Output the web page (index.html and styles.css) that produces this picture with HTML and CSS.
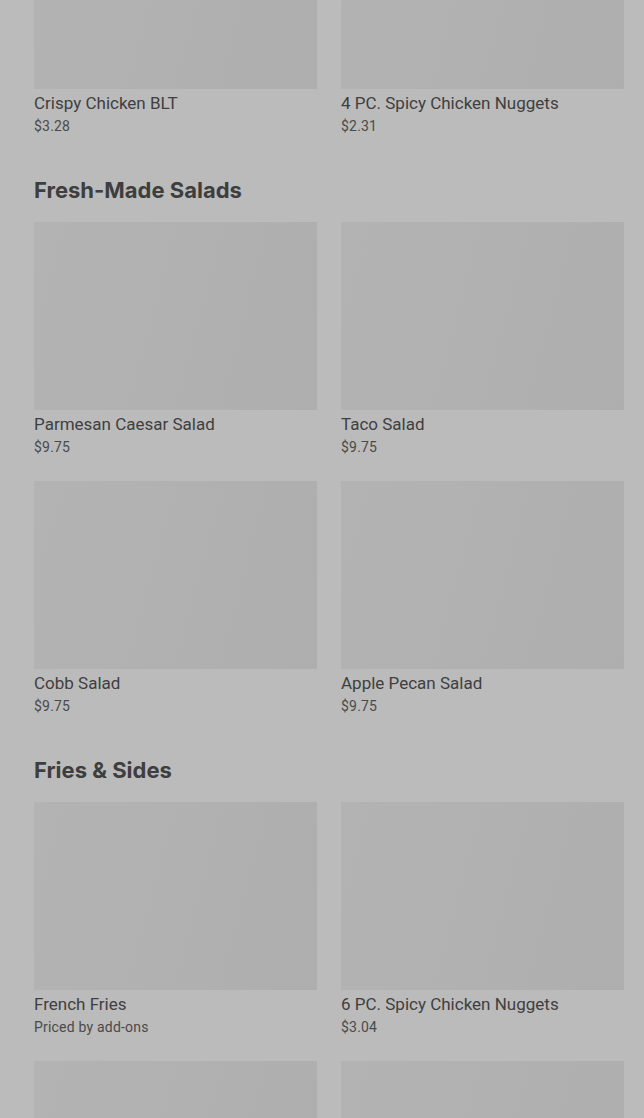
FILE: index.html
```html
<!DOCTYPE html>
<html lang="en">
<head>
<meta charset="UTF-8">
<title>Menu</title>
<link rel="stylesheet" href="styles.css">
</head>
<body>

    <div class="menu">
        <div class="section first">
            <div class="grid">
                <div class="card">
                    <div class="thumb"></div>
                    <div class="name">Crispy Chicken BLT</div>
                    <div class="price">$3.28</div>
                </div>
                <div class="card">
                    <div class="thumb"></div>
                    <div class="name">4 PC. Spicy Chicken Nuggets</div>
                    <div class="price">$2.31</div>
                </div>
            </div>
        </div>

        <div class="section">
            <h2>Fresh-Made Salads</h2>
            <div class="grid">
                <div class="card">
                    <div class="thumb"></div>
                    <div class="name">Parmesan Caesar Salad</div>
                    <div class="price">$9.75</div>
                </div>
                <div class="card">
                    <div class="thumb"></div>
                    <div class="name">Taco Salad</div>
                    <div class="price">$9.75</div>
                </div>
                <div class="card">
                    <div class="thumb"></div>
                    <div class="name">Cobb Salad</div>
                    <div class="price">$9.75</div>
                </div>
                <div class="card">
                    <div class="thumb"></div>
                    <div class="name">Apple Pecan Salad</div>
                    <div class="price">$9.75</div>
                </div>
            </div>
        </div>

        <div class="section">
            <h2>Fries &amp; Sides</h2>
            <div class="grid">
                <div class="card">
                    <div class="thumb"></div>
                    <div class="name">French Fries</div>
                    <div class="price">Priced by add-ons</div>
                </div>
                <div class="card">
                    <div class="thumb"></div>
                    <div class="name">6 PC. Spicy Chicken Nuggets</div>
                    <div class="price">$3.04</div>
                </div>
                <div class="card">
                    <div class="thumb"></div>
                </div>
                <div class="card">
                    <div class="thumb"></div>
                </div>
            </div>
        </div>
    </div>

</body>
</html>
```

FILE: styles.css
```css
/* page dimmed behind an overlay */
body {
    margin: 0;
    background-color: #bbbbbb;
    font-family: Roboto, "Liberation Sans", sans-serif;
    color: #404040;
    overflow: hidden;
}
.menu {
    padding: 0 20px 0 34px;
    margin-top: -99px; /* page is scrolled */
}
.section {
    margin-top: 39px;
}
.section.first {
    margin-top: 0;
}
h2 {
    margin: 0 0 18px;
    font-family: Inter, "Liberation Sans", sans-serif;
    font-size: 22px;
    line-height: 28px;
    font-weight: 700;
    letter-spacing: 0;
    color: #3e3e3e;
}
.grid {
    display: grid;
    grid-template-columns: 1fr 1fr;
    column-gap: 24px;
    row-gap: 23px;
}

/* item card */
.thumb {
    height: 188px;
    background: linear-gradient(105deg, #b3b3b3 0%, #b1b1b1 45%, #aeaeae 100%);
}
.name {
    margin-top: 2px;
    font-size: 17px;
    line-height: 24px;
    font-weight: 400;
    color: #3f3f3f;
}
.price {
    font-size: 14px;
    line-height: 22px;
    letter-spacing: 0.2px;
    color: #4a4a4a;
}
```
